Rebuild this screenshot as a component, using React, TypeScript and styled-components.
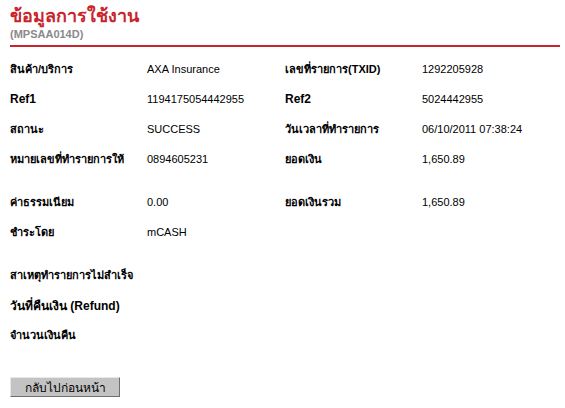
import styled, { createGlobalStyle } from "styled-components";

const GlobalStyle = createGlobalStyle`
  html, body {
    margin: 0;
    padding: 0;
    background: #ffffff;
  }
  body {
    font-family: Tahoma, "Liberation Sans", "Noto Sans", sans-serif;
    font-size: 11px;
    color: #000000;
  }
`;

const Page = styled.div`
  width: 565px;
  padding: 4px 5px 0 10px;
  box-sizing: border-box;
`;

const Header = styled.div`
  border-bottom: 2px solid #c9252c;
  padding-bottom: 5px;
`;

const Title = styled.h1`
  margin: 0;
  font-size: 18px;
  line-height: 24px;
  font-weight: bold;
  color: #c9252c;
`;

const Code = styled.div`
  font-size: 11px;
  line-height: 12px;
  font-weight: bold;
  color: #8a8a8a;
`;

const Section = styled.div<{ $gap: number }>`
  display: flex;
  flex-direction: column;
  margin-top: ${(p) => p.$gap}px;
`;

const Row = styled.div`
  display: grid;
  grid-template-columns: 137px 138px 137px 1fr;
  height: 30px;
  align-items: center;
`;

const Label = styled.div<{ $latin?: boolean }>`
  font-weight: bold;
  font-size: ${(p) => (p.$latin ? "12px" : "11px")};
  white-space: nowrap;
`;

const Value = styled.div`
  white-space: nowrap;
`;

const BackButton = styled.button`
  margin-top: 27px;
  width: 110px;
  height: 20px;
  padding: 0;
  background: #c3c3c3;
  border: 1px solid;
  border-color: #e8e8e8 #6f6f6f #6f6f6f #e8e8e8;
  font-family: inherit;
  font-size: 12px;
  color: #000000;
`;

type Pair = { label: string; value?: string; latin?: boolean };

const mainRows: Pair[][] = [
  [
    { label: "สินค้า/บริการ", value: "AXA Insurance" },
    { label: "เลขที่รายการ(TXID)", value: "1292205928" },
  ],
  [
    { label: "Ref1", value: "1194175054442955", latin: true },
    { label: "Ref2", value: "5024442955", latin: true },
  ],
  [
    { label: "สถานะ", value: "SUCCESS" },
    { label: "วันเวลาที่ทำรายการ", value: "06/10/2011 07:38:24" },
  ],
  [
    { label: "หมายเลขที่ทำรายการให้", value: "0894605231" },
    { label: "ยอดเงิน", value: "1,650.89" },
  ],
];

const feeRows: Pair[][] = [
  [
    { label: "ค่าธรรมเนียม", value: "0.00" },
    { label: "ยอดเงินรวม", value: "1,650.89" },
  ],
  [{ label: "ชำระโดย", value: "mCASH" }],
];

const refundRows: Pair[][] = [
  [{ label: "สาเหตุทำรายการไม่สำเร็จ" }],
  [{ label: "วันที่คืนเงิน (Refund)", latin: true }],
  [{ label: "จำนวนเงินคืน" }],
];

function InfoRow({ pairs }: { pairs: Pair[] }) {
  return (
    <Row>
      {pairs.map((p, i) => [
        <Label key={`l${i}`} $latin={p.latin}>{p.label}</Label>,
        <Value key={`v${i}`}>{p.value}</Value>,
      ])}
    </Row>
  );
}

export default function App() {
  return (
    <Page>
      <GlobalStyle />
      <Header>
        <Title>ข้อมูลการใช้งาน</Title>
        <Code>(MPSAA014D)</Code>
      </Header>

      <Section $gap={7}>
        {mainRows.map((pairs, i) => (
          <InfoRow key={i} pairs={pairs} />
        ))}
      </Section>

      <Section $gap={13}>
        {feeRows.map((pairs, i) => (
          <InfoRow key={i} pairs={pairs} />
        ))}
      </Section>

      <Section $gap={13}>
        {refundRows.map((pairs, i) => (
          <InfoRow key={i} pairs={pairs} />
        ))}
      </Section>

      <BackButton>กลับไปก่อนหน้า</BackButton>
    </Page>
  );
}
